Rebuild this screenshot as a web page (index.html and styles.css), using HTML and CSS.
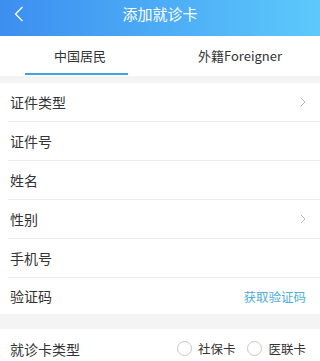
FILE: index.html
```html
<!DOCTYPE html>
<html lang="zh-CN">
<head>
    <meta charset="UTF-8">
    <meta name="viewport" content="width=device-width, initial-scale=1.0">
    <title>添加就诊卡</title>
    <link rel="stylesheet" href="styles.css">
</head>
<body>
    <!-- Header -->
    <div class="header">
        <span class="back">
            <svg width="10" height="16" viewBox="0 0 10 16"><path d="M8.5 1 L1.5 8 L8.5 15" fill="none" stroke="#fff" stroke-width="1.3"/></svg>
        </span>
        <div class="title">添加就诊卡</div>
    </div>

    <!-- Tabs -->
    <div class="tabs">
        <div class="tab active">中国居民</div>
        <div class="tab">外籍Foreigner</div>
    </div>

    <!-- Form -->
    <div class="group">
        <div class="row">
            <span class="label">证件类型</span>
            <span class="arrow"><svg width="6" height="10" viewBox="0 0 6 10"><path d="M0.8 0.8 L5 5 L0.8 9.2" fill="none" stroke="#b8b8b8" stroke-width="1"/></svg></span>
        </div>
        <div class="row"><span class="label">证件号</span></div>
        <div class="row"><span class="label">姓名</span></div>
        <div class="row">
            <span class="label">性别</span>
            <span class="arrow"><svg width="6" height="10" viewBox="0 0 6 10"><path d="M0.8 0.8 L5 5 L0.8 9.2" fill="none" stroke="#b8b8b8" stroke-width="1"/></svg></span>
        </div>
        <div class="row"><span class="label">手机号</span></div>
        <div class="row">
            <span class="label">验证码</span>
            <span class="code-btn">获取验证码</span>
        </div>
    </div>

    <div class="group">
        <div class="row">
            <span class="label">就诊卡类型</span>
            <div class="radios">
                <label class="radio"><span class="circle"></span>社保卡</label>
                <label class="radio"><span class="circle"></span>医联卡</label>
            </div>
        </div>
    </div>
</body>
</html>
```

FILE: styles.css
```css
* {
    margin: 0;
    padding: 0;
    box-sizing: border-box;
    font-family: "Noto Sans CJK SC", "Noto Sans", sans-serif;
}

body {
    background: #f4f4f4;
    width: 320px;
}

.header {
    height: 36px;
    background: linear-gradient(to right, #3c8ef0, #5cc9fb);
    display: flex;
    align-items: center;
    justify-content: center;
    position: relative;
}

.back {
    position: absolute;
    left: 14px;
    top: 6px;
    display: flex;
}

.title {
    color: #fff;
    font-size: 15px;
    line-height: 20px;
    margin-top: -8px;
}

.tabs {
    background: #fff;
    height: 40px;
    display: flex;
}

.tab {
    flex: 1;
    display: flex;
    justify-content: center;
    align-items: center;
    font-size: 13px;
    color: #333;
    position: relative;
    padding-bottom: 2px;
}

.tab.active::after {
    content: "";
    position: absolute;
    left: 25px;
    right: 32px;
    bottom: 1px;
    height: 2px;
    background: #3aa6dc;
}

.group {
    background: #fff;
    margin-top: 7px;
    padding-left: 8px;
}

.group + .group {
    margin-top: 15px;
}

.row {
    height: 39px;
    display: flex;
    align-items: center;
    justify-content: space-between;
    border-bottom: 1px solid #ececec;
    padding-left: 2px;
    padding-right: 14px;
}

.row:last-child {
    border-bottom: none;
    height: 36px;
}

.group + .group .row {
    height: 39px;
}

.label {
    font-size: 14px;
    color: #333;
}

.arrow {
    display: flex;
}

.code-btn {
    font-size: 12.5px;
    color: #4eaed8;
}

.radios {
    display: flex;
    gap: 12px;
}

.radio {
    display: flex;
    align-items: center;
    font-size: 12.5px;
    color: #333;
}

.circle {
    width: 15px;
    height: 15px;
    border: 1px solid #c8c8c8;
    border-radius: 50%;
    margin-right: 6px;
}
```
